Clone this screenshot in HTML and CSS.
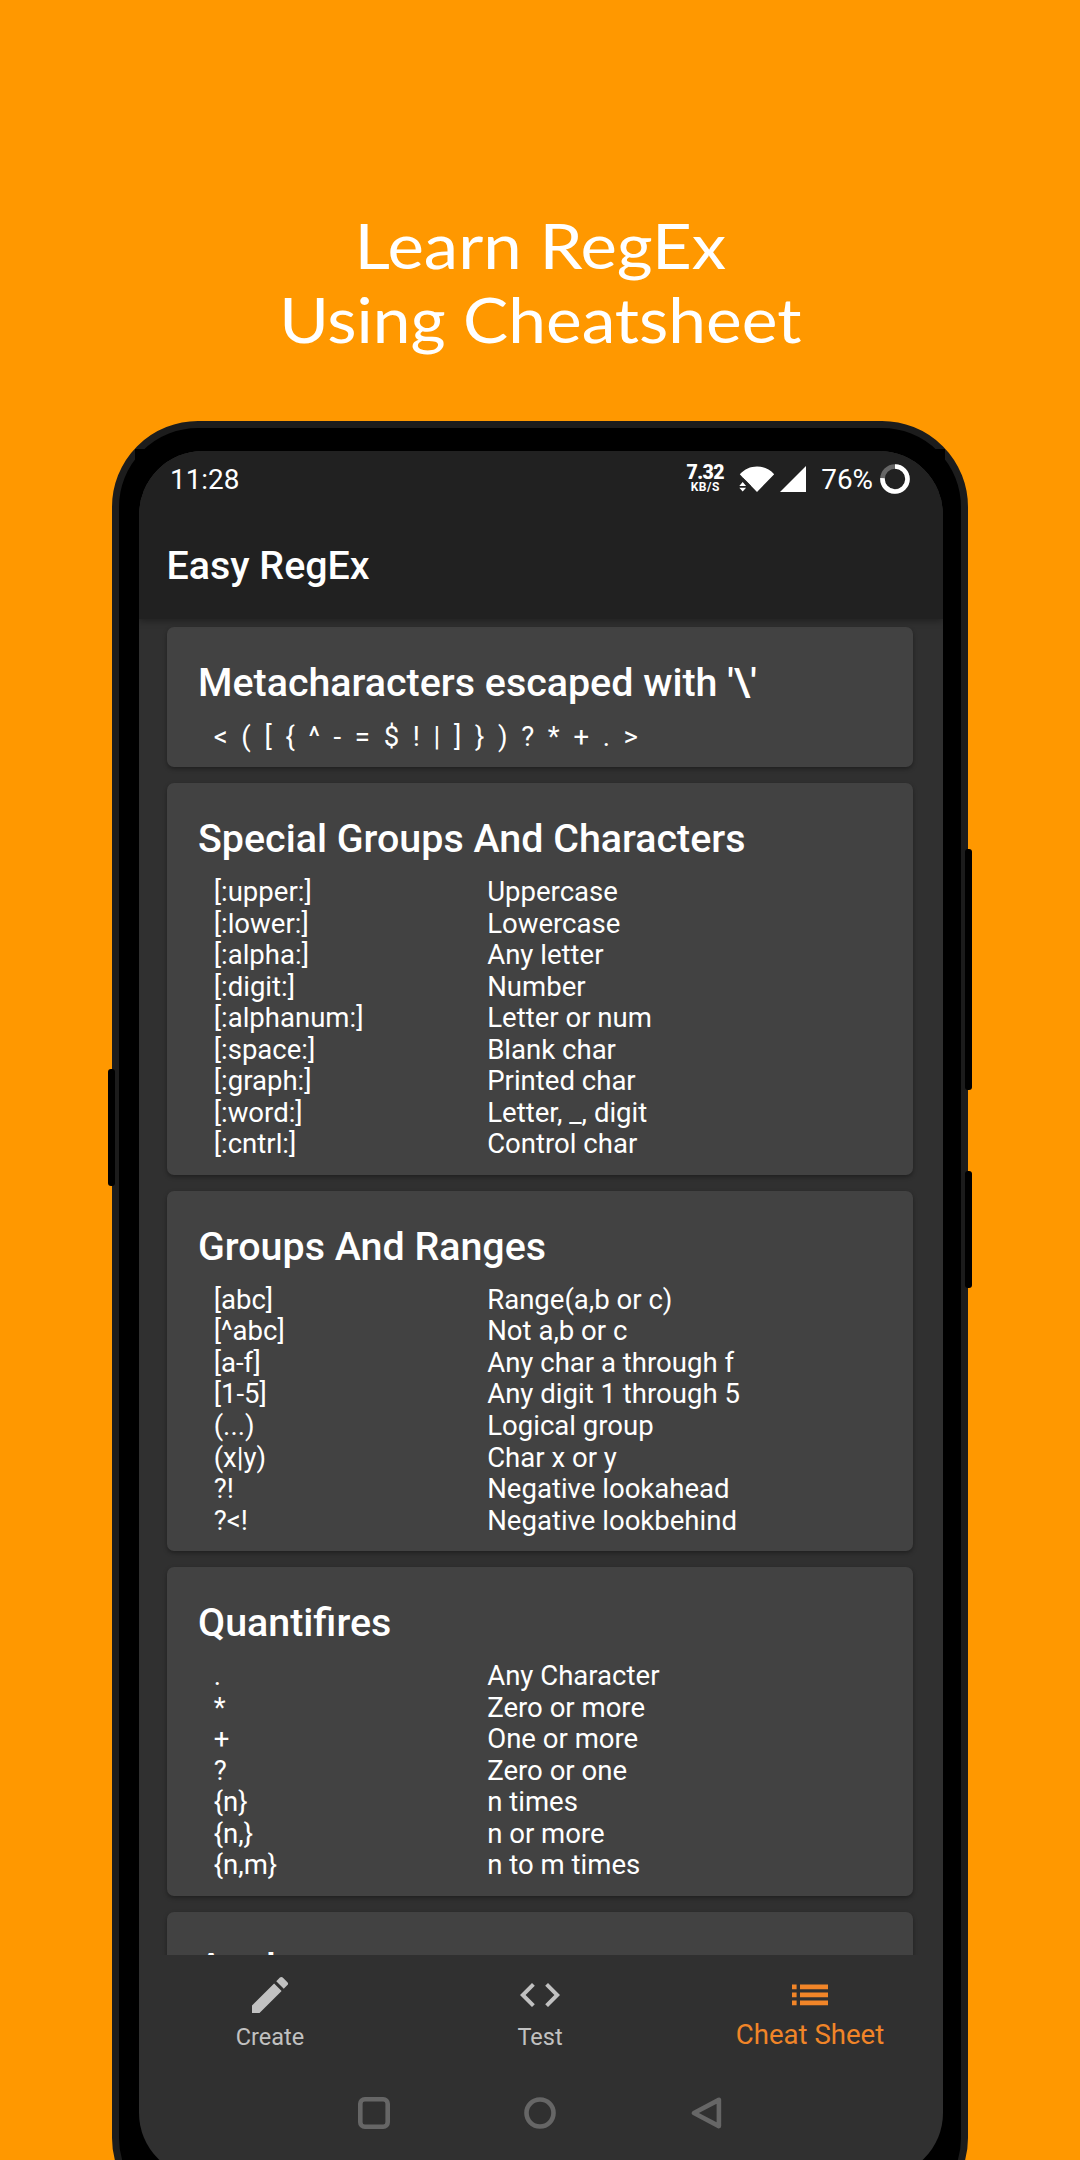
FILE: index.html
```html
<!DOCTYPE html>
<html lang="en">
<head>
<meta charset="utf-8">
<title>Easy RegEx</title>
<link rel="stylesheet" href="styles.css">
</head>
<body>
<h1 class="headline"><span class="line-one">Learn RegEx</span><span class="line-two">Using Cheatsheet</span></h1>
<main class="phone">
  <i class="key key-left"></i><i class="key key-volume"></i><i class="key key-power"></i>
  <div class="glass">
    <div class="screen">
      <header class="top">
        <div class="status">
          <span class="clock">11:28</span>
          <span class="speed"><b>7.32</b><small>KB/S</small></span>
          <svg class="wifi" width="36" height="26" viewBox="0 0 36 26"><path fill="#fff" d="M.8 8.2C5.500 3.200 11.500.5 18 .5s12.500 2.700 17.200 7.700L18 26 8.600 16.200 4 11.800z"/><path fill="#212121" d="M0 14.500 4 12l8 8v6H0z"/><path fill="#fff" d="M.3 20 3.700 16 7.100 20zM.3 21.800h6.800L3.700 25.600z"/></svg>
          <svg class="signal" width="26" height="26" viewBox="0 0 26 26"><path fill="#fff" d="M26 0v26H0z"/></svg>
          <span class="percent">76%</span>
          <svg class="ring" width="30" height="30" viewBox="0 0 30 30" fill="none" stroke-width="4.600"><circle cx="15" cy="15" r="12.500" stroke="#666"/><path stroke="#fff" d="M15 2.500A12.500 12.500 0 1 1 2.520 14.200"/></svg>
        </div>
        <div class="app-title">Easy RegEx</div>
      </header>
      <div class="list">
        <section class="card"><h2>Metacharacters escaped with '\'</h2><p class="meta">&lt;  (  [  {  ^  -  =  $  !  |  ]  }  )  ?  *  +  .  &gt;</p></section>
        <section class="card"><h2>Special Groups And Characters</h2>
          <dl><dt>[:upper:]</dt><dd>Uppercase</dd><dt>[:lower:]</dt><dd>Lowercase</dd><dt>[:alpha:]</dt><dd>Any letter</dd><dt>[:digit:]</dt><dd>Number</dd><dt>[:alphanum:]</dt><dd>Letter or num</dd><dt>[:space:]</dt><dd>Blank char</dd><dt>[:graph:]</dt><dd>Printed char</dd><dt>[:word:]</dt><dd>Letter, _, digit</dd><dt>[:cntrl:]</dt><dd>Control char</dd></dl></section>
        <section class="card"><h2>Groups And Ranges</h2>
          <dl><dt>[abc]</dt><dd>Range(a,b or c)</dd><dt>[^abc]</dt><dd>Not a,b or c</dd><dt>[a-f]</dt><dd>Any char a through f</dd><dt>[1-5]</dt><dd>Any digit 1 through 5</dd><dt>(...)</dt><dd>Logical group</dd><dt>(x|y)</dt><dd>Char x or y</dd><dt>?!</dt><dd>Negative lookahead</dd><dt>?&lt;!</dt><dd>Negative lookbehind</dd></dl></section>
        <section class="card"><h2>Quantifires</h2>
          <dl><dt>.</dt><dd>Any Character</dd><dt>*</dt><dd>Zero or more</dd><dt>+</dt><dd>One or more</dd><dt>?</dt><dd>Zero or one</dd><dt>{n}</dt><dd>n times</dd><dt>{n,}</dt><dd>n or more</dd><dt>{n,m}</dt><dd>n to m times</dd></dl></section>
        <section class="card"><h2>Anchors</h2></section>
      </div>
      <nav class="tabs">
        <a class="tab"><svg width="48" height="48" viewBox="0 0 24 24"><path d="M3 17.250V21h3.750L17.810 9.940l-3.750-3.750L3 17.250zM20.710 7.040a1 1 0 0 0 0-1.410l-2.340-2.340a1 1 0 0 0-1.410 0l-1.830 1.830 3.750 3.750 1.830-1.830z"/></svg><span>Create</span></a>
        <a class="tab"><svg width="48" height="48" viewBox="0 0 24 24"><path d="M9.400 16.600 4.800 12l4.600-4.600L8 6l-6 6 6 6 1.400-1.400zm5.200 0 4.600-4.600-4.600-4.600L16 6l6 6-6 6-1.400-1.400z"/></svg><span>Test</span></a>
        <a class="tab active"><svg width="48" height="48" viewBox="0 0 24 24"><path d="M3 13.100h2.300v-2.300H3zM3 17.100h2.300v-2.300H3zM3 9.100h2.300V6.800H3zM7 13.100h14v-2.300H7zM7 17.100h14v-2.300H7zM7 6.800v2.300h14V6.800z"/></svg><span>Cheat Sheet</span></a>
      </nav>
      <div class="system">
        <svg width="32" height="32" viewBox="0 0 32 32"><rect x="2.300" y="2.300" width="27.400" height="27.400" rx="4.500"/></svg>
        <svg width="32" height="32" viewBox="0 0 32 32"><circle cx="16" cy="16" r="13.500"/></svg>
        <svg width="32" height="32" viewBox="0 0 32 32"><path d="M28.900 2.900v26.200L4 16z"/></svg>
      </div>
    </div>
  </div>
</main>
</body>
</html>
```
FILE: styles.css
```css
* { box-sizing: border-box; }
body { margin: 0; width: 1080px; height: 2160px; overflow: hidden; background: #ff9800; color: #fff; font-family: Roboto, sans-serif; }
.headline { margin: 0; padding-top: 208px; height: 421px; font: 400 62.500px/74px Lato, sans-serif; }
.headline span { display: block; width: fit-content; margin: 0 auto; }
.line-one { transform: scaleX(1.104); }
.line-two { transform: scaleX(1.082); }
.phone { position: relative; width: 856px; height: 1803px; margin: 0 auto; padding: 21px 16px; border: 7px solid #1c1c1c; border-radius: 86px; background: #000; }
.key { position: absolute; width: 7px; border-radius: 3px; background: #000; }
.key-left { left: -11px; top: 641px; height: 117px; }
.key-volume { right: -11px; top: 421px; height: 241px; }
.key-power { right: -11px; top: 743px; height: 117px; }
.glass { width: 810px; height: 1729px; padding: 2px 2px 0 4px; background: #000; }
.screen { display: flex; flex-direction: column; height: 1726px; overflow: hidden; border-radius: 64px; background: #303030; }
.top { position: relative; flex: none; height: 168px; background: #212121; box-shadow: 0 2px 7px rgba(0, 0, 0, .35); }
.status { display: flex; align-items: center; height: 56px; padding: 0 33px 0 31px; font-size: 27.900px; line-height: 32px; }
.clock { flex: 1; padding-top: 2px; }
.speed { display: flex; flex-direction: column; width: 40px; align-items: center; margin-right: 14px; padding-bottom: 2px; font-weight: 700; }
.speed b { font-size: 19.500px; line-height: 17px; letter-spacing: -.6px; }
.speed small { font-size: 12px; line-height: 12px; letter-spacing: .5px; }
.wifi { margin-right: 5px; }
.signal { margin-right: 15px; }
.percent { margin-right: 7px; padding-top: 2px; }
.app-title { padding: 35px 27.500px 0; font-weight: 500; font-size: 39.400px; line-height: 47px; }
.list { flex: none; height: 1336px; overflow: hidden; padding: 8.300px 30px 0 28px; display: flex; flex-direction: column; gap: 15.700px; }
.card { flex: none; padding: 33px 31px 15px; border-radius: 7px; background: #424242; box-shadow: 0 2px 4px rgba(0, 0, 0, .35); }
.card h2 { margin: 0 0 14.300px; font-weight: 500; font-size: 39.400px; line-height: 46px; white-space: nowrap; }
.card:last-child { height: 160px; }
.card dl { display: grid; grid-template-columns: 273.500px 1fr; margin: 0; }
.card dl, .meta { padding-left: 15.700px; font-size: 27.560px; line-height: 31.530px; }
.meta { margin: 0; white-space: pre; }
.card dd { margin: 0; }
.tabs { flex: none; display: flex; height: 109px; margin: 0 -2px 0 -4px; padding-top: 16px; color: #c1c1c1; }
.tab { display: flex; flex: 1; flex-direction: column; align-items: center; font-size: 23.500px; line-height: 36px; }
.tab svg { fill: currentColor; }
.active { color: #f18528; font-size: 27.600px; line-height: 32px; }
.system { display: flex; justify-content: center; gap: 134px; padding: 33px 0 0; margin: 0 -2px 0 -4px; }
.system svg { fill: none; stroke: #666; stroke-width: 4.600; stroke-linejoin: round; }
```
